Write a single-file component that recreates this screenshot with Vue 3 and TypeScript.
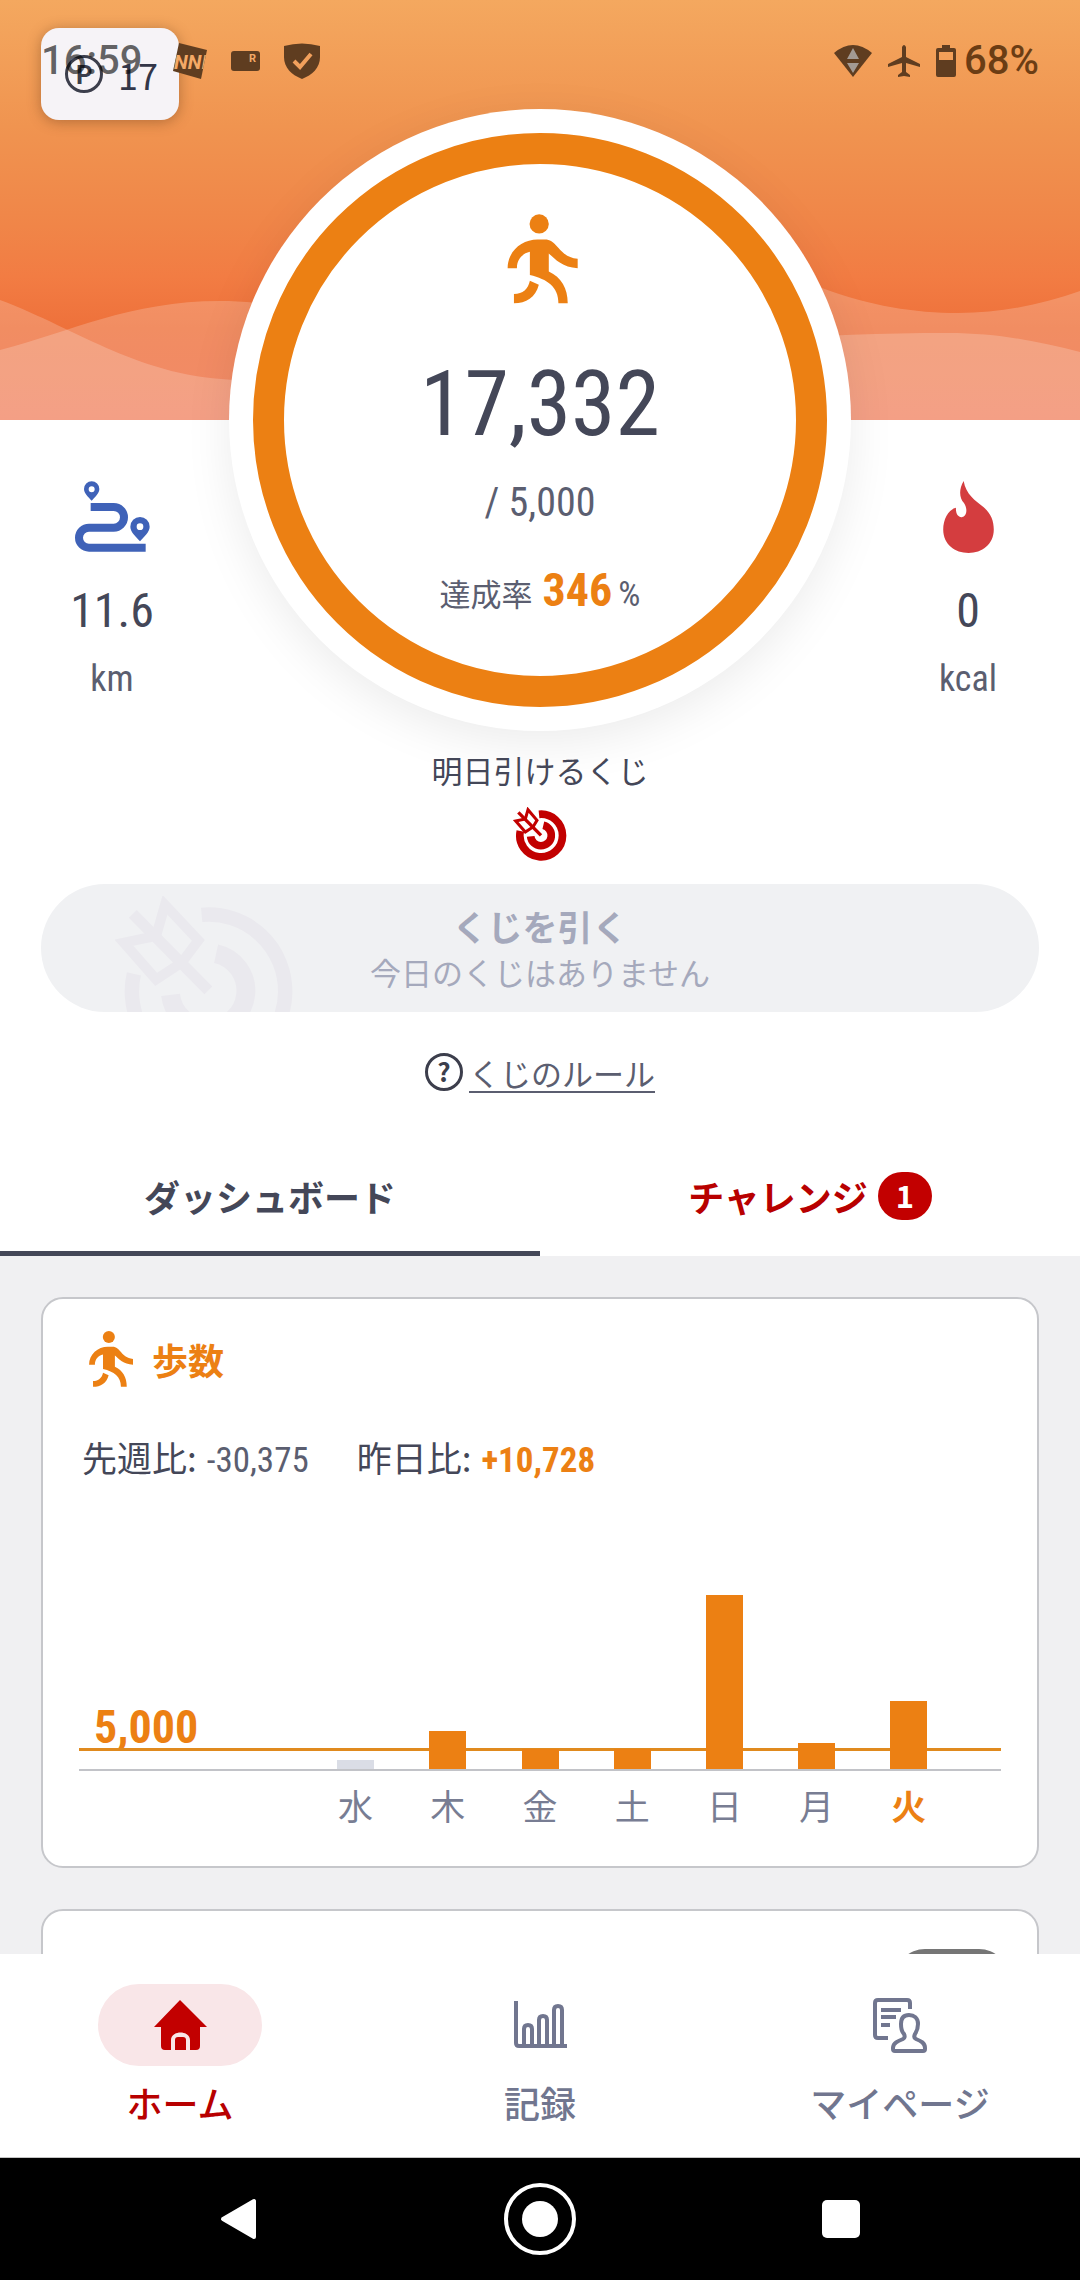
<script setup lang="ts">
import { computed, ref } from 'vue'

interface DaySteps {
  day: string
  steps: number
}

const goal = 5000
const stepsPerPixel = 255
const today = '火'

const week: DaySteps[] = [
  { day: '水', steps: 2300 },
  { day: '木', steps: 9700 },
  { day: '金', steps: 5000 },
  { day: '土', steps: 5000 },
  { day: '日', steps: 44350 },
  { day: '月', steps: 6604 },
  { day: '火', steps: 17332 },
]

const steps = week[week.length - 1].steps
const rate = Math.floor((steps / goal) * 100)
const format = (n: number): string => n.toLocaleString('en-US')

const bars = computed(() =>
  week.map((d) => ({
    day: d.day,
    height: Math.round(d.steps / stepsPerPixel),
    reached: d.steps >= goal,
    current: d.day === today,
  })),
)

const activeTab = ref<'dashboard' | 'challenge'>('dashboard')
const enabled = ref(false)
</script>

<template>
  <div class="app">
    <main class="screen">
      <section class="hero">
        <svg class="sky" viewBox="0 0 1080 420" preserveAspectRatio="none" aria-hidden="true">
          <defs>
            <linearGradient id="sky" x1="0" y1="0" x2="0" y2="1">
              <stop offset="0" stop-color="#f4a85f" />
              <stop offset="0.3" stop-color="#f09450" />
              <stop offset="0.54" stop-color="#f08548" />
              <stop offset="0.66" stop-color="#f27c43" />
              <stop offset="0.78" stop-color="#ee713b" />
              <stop offset="1" stop-color="#ef6b42" />
            </linearGradient>
          </defs>
          <rect width="1080" height="420" fill="url(#sky)" />
          <path d="M0 300C80 330 140 378 240 380C460 384 660 333 948 333C1000 333 1040 342 1080 352V420H0Z" fill="#fff" fill-opacity="0.2" />
          <path d="M0 350C70 332 130 301 220 301C300 301 400 330 500 330C640 330 720 250 822 288C870 306 915 313 958 313C1005 313 1045 303 1080 291V420H0Z" fill="#fff" fill-opacity="0.2" />
        </svg>

        <button class="chip" type="button"><span class="ring-letter">P</span><span>17</span></button>

        <div class="summary">
          <div class="stat">
            <svg width="75" height="72" viewBox="0 0 225 216" aria-hidden="true">
              <path d="M47 78H116a31 31 0 0 1 0 62H42a30 30 0 0 0 0 60H212" fill="none" stroke="#3f62b8" stroke-width="24" />
              <path fill="#3f62b8" fill-rule="evenodd" d="M50 1a23 23 0 0 1 23 23c0 14-14 25-23 35C41 49 27 38 27 24A23 23 0 0 1 50 1Zm0 15a9 9 0 1 0 0 18a9 9 0 1 0 0-18Z" />
              <path fill="#3f62b8" fill-rule="evenodd" d="M195 108a29 29 0 0 1 29 29c0 17-18 31-29 44c-11-13-29-27-29-44a29 29 0 0 1 29-29Zm0 19a10 10 0 1 0 0 20a10 10 0 1 0 0-20Z" />
            </svg>
            <span class="value">11.6</span>
            <span class="unit">km</span>
          </div>

          <div class="dial">
            <div class="dial-ring">
              <svg class="walker" width="78" height="90" viewBox="-20 0 235 269" aria-hidden="true">
                <circle cx="95" cy="29" r="29" />
                <path d="M0 162C0 112 42 76 90 76H112C152 76 152 128 211 134V162C165 160 142 134 124 118V172C162 190 181 222 181 268H153C153 218 120 196 67 183V113C44 118 28 136 28 162Z" />
                <path d="M67 200L94 212C84 250 56 268 19 268V240C46 240 62 224 67 200Z" />
              </svg>
              <span class="steps">{{ format(steps) }}</span>
              <span class="goal">/ {{ format(goal) }}</span>
              <span class="rate">達成率<b>{{ rate }}</b><i>%</i></span>
            </div>
          </div>

          <div class="stat">
            <svg width="51" height="72" viewBox="0 0 151 215" aria-hidden="true">
              <path fill="#d43d3f" d="M61 0C68 40 95 58 120 78C142 96 151 118 151 145C151 190 115 215 76 215C35 215 0 190 0 145C0 115 15 85 38 80C37 98 45 109 56 108C70 106 74 84 62 66C48 52 46 25 61 0Z" />
            </svg>
            <span class="value">0</span>
            <span class="unit">kcal</span>
          </div>
        </div>

        <div class="lottery">
          <p class="lottery-label">明日引けるくじ</p>
          <svg class="target" width="54" height="54" viewBox="44 20 160 162" aria-hidden="true">
            <g fill="none" stroke="currentColor">
              <path stroke-width="23" d="M121 42A64 64 0 1 1 65 92" />
              <path stroke-width="23" d="M134 75A31 31 0 1 1 96 108" />
              <path stroke-width="10" d="M59 36L127 105" />
              <path stroke-width="9" d="M80 56L88 28L115 60L103 80L80 95L51 62Z" />
            </g>
          </svg>

          <button class="draw" type="button" disabled>
            <svg class="draw-mark" width="180" height="180" viewBox="44 20 160 162" aria-hidden="true">
              <g fill="none" stroke="currentColor">
                <path stroke-width="13" d="M121 37A69 69 0 1 1 60 90" />
                <path stroke-width="17" d="M134 72A34 34 0 1 1 93 109" />
                <path stroke-width="10" d="M59 36L127 105" />
                <path stroke-width="9" d="M80 56L88 28L118 60L103 80L80 95L51 62Z" />
              </g>
            </svg>
            <strong>くじを引く</strong>
            <span>今日のくじはありません</span>
          </button>

          <a class="rules" href="#rules"><span class="ring-letter">?</span><span class="rules-text">くじのルール</span></a>
        </div>
      </section>

      <nav class="tabs">
        <button type="button" :class="{ active: activeTab === 'dashboard' }" @click="activeTab = 'dashboard'">ダッシュボード</button>
        <button type="button" class="challenge" :class="{ active: activeTab === 'challenge' }" @click="activeTab = 'challenge'">
          チャレンジ<span class="badge">1</span>
        </button>
      </nav>

      <section class="board">
        <article class="card steps-card">
          <h2>
            <svg class="walker" width="56" height="56" viewBox="-34 0 269 269" aria-hidden="true">
              <circle cx="95" cy="29" r="29" />
              <path d="M0 162C0 112 42 76 90 76H112C152 76 152 128 211 134V162C165 160 142 134 124 118V172C162 190 181 222 181 268H153C153 218 120 196 67 183V113C44 118 28 136 28 162Z" />
              <path d="M67 200L94 212C84 250 56 268 19 268V240C46 240 62 224 67 200Z" />
            </svg>
            歩数
          </h2>
          <dl class="compare">
            <div>
              <dt>先週比:</dt>
              <dd>-30,375</dd>
            </div>
            <div>
              <dt>昨日比:</dt>
              <dd class="up">+10,728</dd>
            </div>
          </dl>
          <div class="plot">
            <span class="goal-label">{{ format(goal) }}</span>
            <div class="goal-line" :style="{ bottom: Math.round(goal / stepsPerPixel) - 2 + 'px' }"></div>
            <div class="columns">
              <div v-for="b in bars" :key="b.day" class="column">
                <div class="bar" :class="{ reached: b.reached }" :style="{ height: b.height + 'px' }"></div>
              </div>
            </div>
          </div>
          <div class="columns days">
            <span v-for="b in bars" :key="b.day" class="column" :class="{ current: b.current }">{{ b.day }}</span>
          </div>
        </article>

        <article class="card switch-card">
          <input v-model="enabled" class="switch" type="checkbox" aria-label="表示" />
        </article>
      </section>
    </main>

    <nav class="bottom-nav">
      <a href="#home" class="current">
        <span class="pill">
          <svg width="53" height="50" viewBox="0 0 53 50" aria-hidden="true">
            <path fill="#c20000" d="M26 0L53 27H46V46a4 4 0 0 1-4 4H36V40c0-10-19-10-19 0V50H11a4 4 0 0 1-4-4V27H0Z" />
            <path fill="#c20000" d="M21 50V40q0-3 3-3h5q3 0 3 3V50Z" />
          </svg>
        </span>
        ホーム
      </a>
      <a href="#records">
        <span class="pill">
          <svg width="53" height="48" viewBox="0 0 53 48" fill="none" stroke="currentColor" stroke-width="4" aria-hidden="true">
            <path d="M2 0V42q0 3 3 3H53M10 44V28q0-4 4-4t4 4V44M25 44V19q0-4 4-4t4 4V44M40 44V9q0-4 4-4t4 4V44" />
          </svg>
        </span>
        記録
      </a>
      <a href="#mypage">
        <span class="pill">
          <svg width="55" height="55" viewBox="0 0 55 55" fill="none" stroke="currentColor" stroke-width="4" aria-hidden="true">
            <path d="M37 11V5q0-3-3-3H5Q2 2 2 5V37q0 3 3 3H15M8 12H28M8 19H23M8 27H17" />
            <path d="M31 36C28 33 28 29 28 26C28 20 31 17 36 17S45 20 45 26C45 30 44 33 42 36C41 38 41 40 43 41C48 43 52 45 52 50V51q0 2-2 2H22q-2 0-2-2V50C20 45 25 43 30 41C32 40 32 38 31 36Z" />
          </svg>
        </span>
        マイページ
      </a>
    </nav>

    <footer class="system-keys">
      <button type="button" aria-label="戻る">
        <svg width="40" height="44" viewBox="0 0 40 44"><path d="M4 22L35 4V40Z" fill="#fff" stroke="#fff" stroke-width="4" stroke-linejoin="round" /></svg>
      </button>
      <button type="button" aria-label="ホーム画面">
        <svg width="76" height="76" viewBox="0 0 76 76"><circle cx="38" cy="38" r="34" fill="none" stroke="#fff" stroke-width="4" /><circle cx="38" cy="38" r="18" fill="#fff" /></svg>
      </button>
      <button type="button" aria-label="履歴">
        <svg width="40" height="40" viewBox="0 0 40 40"><rect x="1" y="1" width="38" height="38" rx="5" fill="#fff" /></svg>
      </button>
    </footer>

    <header class="status">
      <span class="clock">16:59</span>
      <svg class="nni" width="34" height="36" viewBox="0 0 34 36" aria-hidden="true">
        <defs><clipPath id="tag"><path d="M6 0L34 7L28 36L0 28Z" /></clipPath></defs>
        <path class="ink" d="M6 0L34 7L28 36L0 28Z" />
        <text x="1" y="26" clip-path="url(#tag)" class="cut nni-text">NNI</text>
      </svg>
      <svg class="card-icon" width="29" height="20" viewBox="0 0 29 20" aria-hidden="true">
        <rect class="ink" width="29" height="20" rx="3" />
        <text x="18" y="11" class="cut r-text">R</text>
      </svg>
      <svg width="36" height="36" viewBox="0 0 36 36" aria-hidden="true">
        <path class="ink" d="M0 3Q18-2 36 3V14C36 25 28 32 18 36C8 32 0 25 0 14Z" />
        <path d="M10 18L16 24L27 11" fill="none" stroke="#f2a05c" stroke-width="4" />
      </svg>
      <span class="spacer"></span>
      <svg width="38" height="32" viewBox="0 0 38 32" aria-hidden="true">
        <path class="ink" d="M0 8Q19-8 38 8L19 32Z" />
        <path d="M19 3L25 14H13ZM13 18H25L19 28Z" fill="#a39a93" />
      </svg>
      <svg class="plane" width="32" height="32" viewBox="0 0 32 32" aria-hidden="true">
        <path class="ink" d="M14 2q2-4 4 0V12L32 19V22L18 18V27L22 30V32L16 31L10 32V30L14 27V18L0 22V19L14 12Z" />
      </svg>
      <svg width="20" height="32" viewBox="0 0 20 32" aria-hidden="true">
        <path class="ink" fill-rule="evenodd" d="M6 0H14V3H18q2 0 2 2V30q0 2-2 2H2q-2 0-2-2V5q0-2 2-2H6ZM3 7V15H17V7Z" />
      </svg>
      <span class="percent">68%</span>
    </header>
  </div>
</template>

<style>
body {
  margin: 0;
}
</style>

<style scoped>
.app {
  position: relative;
  display: flex;
  flex-direction: column;
  height: 100vh;
  background: #fff;
  color: #444758;
  font-family: 'Noto Sans CJK JP', sans-serif;
  font-size: 31px;
  line-height: 44px;
}
button {
  margin: 0;
  padding: 0;
  border: 0;
  background: none;
  color: inherit;
  font: inherit;
}
a {
  color: inherit;
  text-decoration: none;
}
svg {
  display: block;
  flex: none;
}

/* system status bar, drawn over the app */
.status {
  position: absolute;
  inset: 0 0 auto 0;
  display: flex;
  align-items: center;
  height: 122px;
  padding: 0 41px;
  color: rgba(0, 0, 0, 0.6);
  font-family: Roboto, sans-serif;
  font-size: 40px;
  font-weight: 500;
  pointer-events: none;
}
.ink {
  fill: #5f3d20;
}
.cut {
  fill: #f4a966;
  font-family: Roboto, sans-serif;
  font-weight: 700;
}
.nni-text {
  font-size: 20px;
  font-style: italic;
}
.r-text {
  font-size: 11px;
}
.nni {
  margin-left: 31px;
}
.card-icon {
  margin: 0 24px;
}
.spacer {
  flex: 1;
}
.plane {
  margin: 0 16px;
}
.percent {
  margin-left: 8px;
  color: #6b3d14;
}

/* hero */
.screen {
  flex: 1;
  min-height: 0;
  overflow-y: auto;
  scrollbar-width: none;
}
.hero {
  position: relative;
}
.sky {
  position: absolute;
  top: 0;
  left: 0;
  width: 100%;
  height: 420px;
}
.chip {
  position: absolute;
  top: 28px;
  left: 41px;
  display: flex;
  align-items: center;
  gap: 15px;
  height: 92px;
  padding: 0 21px 0 24px;
  border-radius: 18px;
  background: #f6f3f7;
  box-shadow: 0 2px 14px rgba(90, 50, 20, 0.4);
  color: #333648;
  font-size: 36px;
}
.ring-letter {
  box-sizing: border-box;
  width: 38px;
  height: 38px;
  border: 3px solid #3c3e4c;
  border-radius: 50%;
  color: #3c3e4c;
  font-size: 26px;
  font-weight: 700;
  line-height: 30px;
  text-align: center;
}
.summary {
  position: relative;
  display: flex;
  gap: 5px;
  padding-top: 109px;
  pointer-events: none;
}
.stat {
  flex: 1;
  display: flex;
  flex-direction: column;
  align-items: center;
  padding-top: 372px;
  font-family: 'Roboto Condensed', 'Noto Sans CJK JP', sans-serif;
}
.value {
  margin-top: 28px;
  font-size: 48px;
  line-height: 60px;
}
.unit {
  margin-top: 16px;
  color: #5b5e70;
  font-size: 36px;
}
.dial {
  padding: 24px;
  border-radius: 50%;
  background: #fff;
  box-shadow: 0 12px 48px rgba(0, 0, 0, 0.08);
}
.dial-ring {
  box-sizing: border-box;
  display: flex;
  flex-direction: column;
  align-items: center;
  width: 574px;
  height: 574px;
  padding-top: 50px;
  border: 31px solid #ec8013;
  border-radius: 50%;
  font-family: 'Roboto Condensed', 'Noto Sans CJK JP', sans-serif;
}
.walker {
  fill: #ec8013;
}
.steps {
  margin-top: 51px;
  font-size: 90px;
  line-height: 100px;
}
.goal {
  margin-top: 24px;
  color: #5b5e70;
  font-size: 40px;
  line-height: 48px;
}
.rate {
  display: flex;
  align-items: baseline;
  margin-top: 39px;
  color: #5b5e70;
  line-height: 48px;
}
.rate b {
  margin: 0 6px 0 10px;
  color: #ec8013;
  font-size: 46px;
}
.rate i {
  font-size: 35px;
  font-style: normal;
}

/* lottery */
.lottery {
  position: relative;
  display: flex;
  flex-direction: column;
  align-items: center;
  padding: 17px 41px 47px;
}
.lottery-label {
  margin: 0;
}
.target {
  margin: 15px 0 23px;
  color: #c20000;
}
.draw {
  position: relative;
  display: flex;
  flex-direction: column;
  align-items: center;
  justify-content: center;
  width: 100%;
  height: 128px;
  border-radius: 64px;
  overflow: hidden;
  background: #f0f1f3;
  color: #a5a9bc;
}
.draw strong {
  font-size: 35px;
  line-height: 48px;
}
.draw-mark {
  position: absolute;
  top: 12px;
  left: 74px;
  color: #eae9ee;
}
.draw strong,
.draw span {
  position: relative;
}
.rules {
  display: flex;
  align-items: center;
  gap: 6px;
  margin-top: 39px;
  color: #5b5e70;
}
.rules-text {
  box-sizing: border-box;
  height: 42px;
  border-bottom: 2px solid #5b5e70;
}

/* tabs */
.tabs {
  display: flex;
}
.tabs button {
  flex: 1;
  display: flex;
  align-items: center;
  justify-content: center;
  gap: 10px;
  height: 116px;
  border-bottom: 5px solid transparent;
  font-size: 36px;
  font-weight: 700;
}
.tabs button.active {
  border-bottom-color: #444758;
}
.tabs .challenge {
  color: #b80000;
}
.badge {
  width: 54px;
  height: 48px;
  border-radius: 24px;
  background: #c20000;
  color: #fff;
  font-size: 31px;
  line-height: 46px;
  text-align: center;
}

/* dashboard */
.board {
  display: flex;
  flex-direction: column;
  gap: 41px;
  padding: 41px;
  background: #f0f0f2;
}
.card {
  border: 2px solid #c6c7cb;
  border-radius: 22px;
  background: #fff;
}
.steps-card {
  padding: 32px 36px 39px;
}
h2 {
  display: flex;
  align-items: center;
  gap: 14px;
  margin: 0;
  padding-left: 3px;
  color: #ec8013;
  font-size: 36px;
}
.compare {
  display: flex;
  gap: 48px;
  margin: 46px 0 44px;
  padding-left: 3px;
  font-size: 35px;
  line-height: 48px;
}
.compare div {
  display: flex;
  align-items: baseline;
  gap: 10px;
}
.compare dd {
  margin: 0;
  color: #5b5e70;
  font-family: 'Roboto Condensed', sans-serif;
}
.compare .up {
  color: #ec8013;
  font-weight: 700;
}
.plot {
  position: relative;
  display: flex;
  flex-direction: column;
  justify-content: flex-end;
  height: 240px;
  border-bottom: 2px solid #c2c3c8;
}
.goal-label {
  position: absolute;
  bottom: 18px;
  left: 15px;
  color: #ec8013;
  font-family: 'Roboto Condensed', sans-serif;
  font-size: 46px;
  font-weight: 700;
  line-height: 48px;
}
.goal-line {
  position: absolute;
  left: 0;
  right: 0;
  height: 3px;
  background: #e08a1e;
}
.columns {
  position: relative;
  display: flex;
  padding: 0 5% 0 25%;
}
.column {
  flex: 1;
  display: flex;
  align-items: flex-end;
  justify-content: center;
}
.bar {
  width: 37px;
  background: #dadde6;
}
.bar.reached {
  background: #ec8013;
}
.days {
  margin-top: 12px;
  color: #787d93;
  font-size: 35px;
}
.days .current {
  color: #ec8013;
  font-weight: 700;
}
.switch-card {
  display: flex;
  justify-content: flex-end;
  padding: 38px 28px;
}
.switch {
  appearance: none;
  width: 114px;
  height: 60px;
  margin: 0;
  border-radius: 30px;
  background: #767676;
}

/* bottom navigation */
.bottom-nav {
  display: flex;
  padding: 30px 0 33px;
  border-bottom: 1px solid #c4c4c4;
  background: #fff;
}
.bottom-nav a {
  flex: 1;
  display: flex;
  flex-direction: column;
  align-items: center;
  gap: 14px;
  color: #71768f;
  font-size: 36px;
  font-weight: 500;
}
.bottom-nav .current {
  color: #b80000;
}
.pill {
  display: flex;
  align-items: center;
  justify-content: center;
  width: 164px;
  height: 82px;
  border-radius: 41px;
}
.current .pill {
  background: #f9e6e8;
}

/* system keys */
.system-keys {
  display: flex;
  padding: 0 88px;
  background: #000;
}
.system-keys button {
  flex: 1;
  display: flex;
  align-items: center;
  justify-content: center;
  height: 122px;
}
</style>
